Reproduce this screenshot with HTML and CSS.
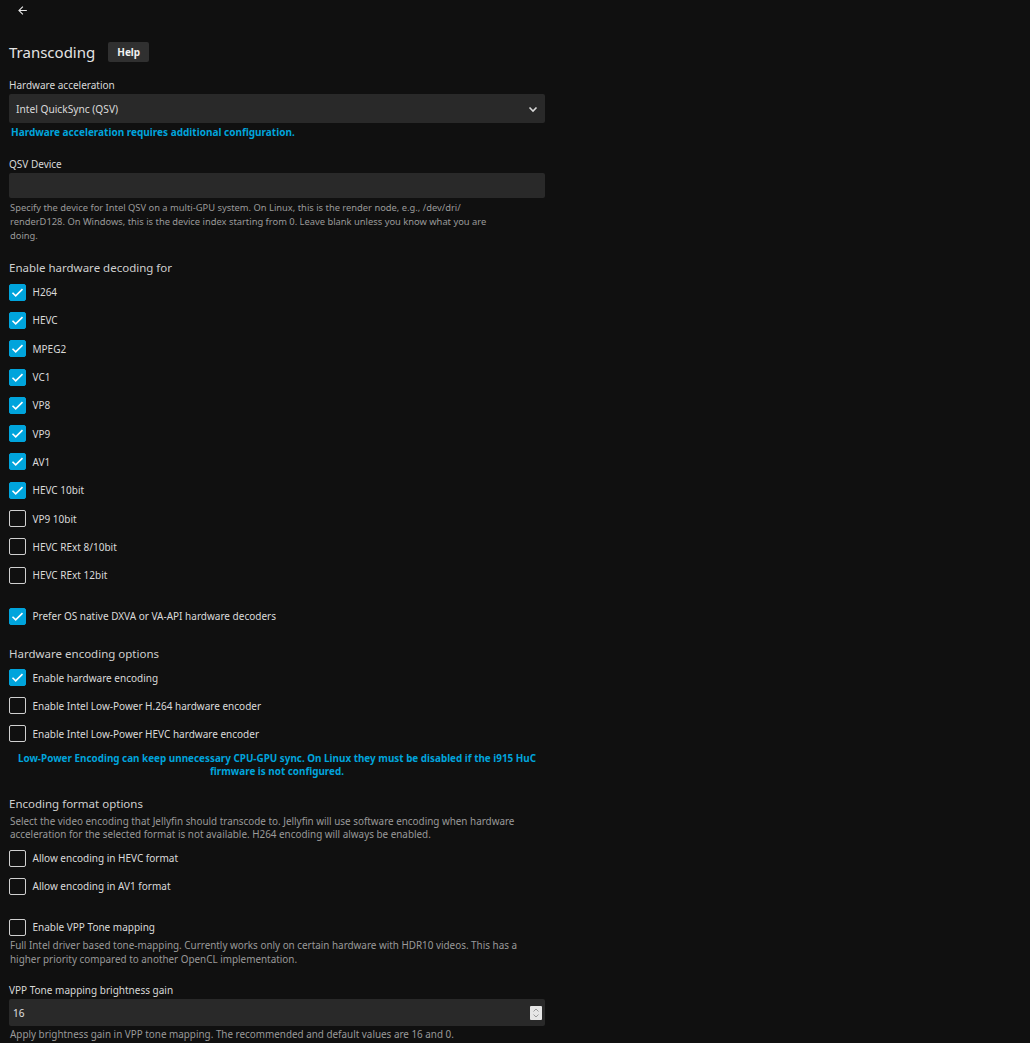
FILE: index.html
```html
<!DOCTYPE html>
<html lang="en">
<head>
    <meta charset="UTF-8">
    <title>Transcoding</title>
    <link rel="stylesheet" href="styles.css">
</head>
<body>
    <div class="topbar">
        <svg class="back" width="13" height="13" viewBox="0 0 24 24"><path d="M20 11H7.83l5.59-5.59L12 4l-8 8 8 8 1.41-1.41L7.83 13H20v-2z" fill="#e8e8e8"/></svg>
    </div>

    <div class="title-row">
        <h2>Transcoding</h2>
        <span class="help">Help</span>
    </div>

    <div class="field first">
        <div class="label">Hardware acceleration</div>
        <div class="select">
            <span>Intel QuickSync (QSV)</span>
            <svg width="10" height="8" viewBox="0 0 10 8"><path d="M1.5 2.5 5 6l3.5-3.5" stroke="#d8d8d8" stroke-width="1.6" fill="none"/></svg>
        </div>
        <div class="hint">Hardware acceleration requires additional configuration.</div>
    </div>

    <div class="field qsv">
        <div class="label">QSV Device</div>
        <div class="input"></div>
        <div class="desc small">Specify the device for Intel QSV on a multi-GPU system. On Linux, this is the render node, e.g., /dev/dri/<br>renderD128. On Windows, this is the device index starting from 0. Leave blank unless you know what you are<br>doing.</div>
    </div>

    <h3 class="section decode">Enable hardware decoding for</h3>
    <div class="checks">
        <div class="check on"><span class="box"></span>H264</div>
        <div class="check on"><span class="box"></span>HEVC</div>
        <div class="check on"><span class="box"></span>MPEG2</div>
        <div class="check on"><span class="box"></span>VC1</div>
        <div class="check on"><span class="box"></span>VP8</div>
        <div class="check on"><span class="box"></span>VP9</div>
        <div class="check on"><span class="box"></span>AV1</div>
        <div class="check on"><span class="box"></span>HEVC 10bit</div>
        <div class="check"><span class="box"></span>VP9 10bit</div>
        <div class="check"><span class="box"></span>HEVC RExt 8/10bit</div>
        <div class="check"><span class="box"></span>HEVC RExt 12bit</div>
    </div>

    <div class="check on prefer"><span class="box"></span>Prefer OS native DXVA or VA-API hardware decoders</div>

    <h3 class="section encode">Hardware encoding options</h3>
    <div class="checks">
        <div class="check rowfix on"><span class="box"></span>Enable hardware encoding</div>
        <div class="check rowfix"><span class="box"></span>Enable Intel Low-Power H.264 hardware encoder</div>
        <div class="check rowfix"><span class="box"></span>Enable Intel Low-Power HEVC hardware encoder</div>
    </div>
    <div class="warn">Low-Power Encoding can keep unnecessary CPU-GPU sync. On Linux they must be disabled if the i915 HuC<br>firmware is not configured.</div>

    <h3 class="section format">Encoding format options</h3>
    <div class="desc tight">Select the video encoding that Jellyfin should transcode to. Jellyfin will use software encoding when hardware<br>acceleration for the selected format is not available. H264 encoding will always be enabled.</div>
    <div class="checks formats">
        <div class="check rowfix"><span class="box"></span>Allow encoding in HEVC format</div>
        <div class="check rowfix"><span class="box"></span>Allow encoding in AV1 format</div>
    </div>

    <div class="check vpp"><span class="box"></span>Enable VPP Tone mapping</div>
    <div class="desc vpp-desc">Full Intel driver based tone-mapping. Currently works only on certain hardware with HDR10 videos. This has a<br>higher priority compared to another OpenCL implementation.</div>

    <div class="field gain">
        <div class="label">VPP Tone mapping brightness gain</div>
        <div class="input number">
            <span>16</span>
            <span class="spin">
                <svg width="8" height="12" viewBox="0 0 8 12"><path d="M1.5 4.5 4 2l2.5 2.5M1.5 7.5 4 10l2.5-2.5" stroke="#9a9a9a" stroke-width="1" fill="none"/></svg>
            </span>
        </div>
        <div class="desc">Apply brightness gain in VPP tone mapping. The recommended and default values are 16 and 0.</div>
    </div>
</body>
</html>
```

FILE: styles.css
```css
body {
    margin: 0;
    padding: 0 9px;
    background-color: #101010;
    color: #dadada;
    font-family: "Noto Sans", "Open Sans", sans-serif;
    font-size: 10px;
    width: 536px;
}
.topbar {
    height: 20px;
    display: flex;
    align-items: center;
    padding-left: 7px;
}
.title-row {
    margin-top: 22px;
    height: 20px;
    display: flex;
    align-items: center;
    gap: 13px;
}
h2 {
    margin: 0;
    font-size: 15px;
    font-weight: 400;
    color: #e4e4e4;
}
.help {
    background-color: #303030;
    color: #f0f0f0;
    font-weight: bold;
    font-size: 10px;
    border-radius: 2px;
    height: 20px;
    line-height: 20px;
    padding: 0 9px;
}
.field.first {
    margin-top: 16px;
}
.label {
    line-height: 14px;
    color: #d8d8d8;
}
.select, .input {
    margin-top: 2px;
    background-color: #292929;
    border-radius: 2px;
    display: flex;
    align-items: center;
    justify-content: space-between;
    padding: 0 7px;
}
.select {
    height: 29px;
    font-size: 10.2px;
}
.input {
    height: 25px;
}
.hint {
    margin-top: 2px;
    line-height: 14px;
    color: #00a4dc;
    font-weight: bold;
    font-size: 10px;
    padding-left: 2px;
}
.field.qsv {
    margin-top: 18px;
}
.desc {
    margin-top: 3px;
    line-height: 14px;
    color: #9a9a9a;
    font-size: 9.9px;
    padding-left: 1px;
}
.desc.small {
    font-size: 9.35px;
}
.section {
    margin: 0;
    font-weight: 400;
    font-size: 11.5px;
    line-height: 16px;
    color: #cfcfcf;
}
.section.decode {
    margin-top: 17px;
}
.checks {
    margin-top: 2px;
}
.check {
    height: 28.3px;
    display: flex;
    align-items: center;
    gap: 6.5px;
    color: #dadada;
}
.check.rowfix {
    height: 28px;
}
.box {
    width: 15px;
    height: 15px;
    border: 1.5px solid #d0d0d0;
    border-radius: 2px;
    flex: none;
}
.check.on .box {
    border-color: #00a4dc;
    background-color: #00a4dc;
    background-image: url("data:image/svg+xml,%3Csvg xmlns='http://www.w3.org/2000/svg' viewBox='0 0 18 18'%3E%3Cpath d='M4 9.2l3.2 3.2L14 5.6' stroke='white' stroke-width='1.6' fill='none'/%3E%3C/svg%3E");
    background-size: 18px 18px;
    background-position: center;
}
.check.prefer {
    margin-top: 13px;
}
.section.encode {
    margin-top: 15px;
}
.warn {
    margin-top: 4px;
    text-align: center;
    color: #00a4dc;
    font-weight: bold;
    font-size: 9.9px;
    line-height: 13px;
}
.section.format {
    margin-top: 18.5px;
}
.desc.tight {
    margin-top: 2.5px;
    line-height: 13px;
}
.checks.formats {
    margin-top: 3.5px;
}
.check.vpp {
    margin-top: 15px;
    height: 24px;
}
.desc.vpp-desc {
    margin-top: -1px;
}
.field.gain {
    margin-top: 17px;
}
.input.number {
    height: 27px;
    padding: 0 3px 0 4px;
}
.input.number span:first-child {
    color: #e0e0e0;
}
.spin {
    width: 12px;
    height: 14px;
    background-color: #e6e6e6;
    border-radius: 1px;
    display: flex;
    align-items: center;
    justify-content: center;
}
.field.gain .desc {
    margin-top: 1px;
}
```
